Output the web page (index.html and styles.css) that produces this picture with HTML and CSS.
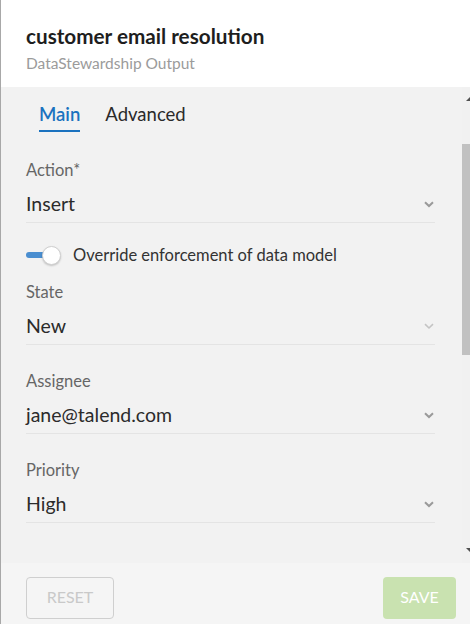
FILE: index.html
```html
<!DOCTYPE html>
<html lang="en">
<head>
<meta charset="utf-8">
<title>customer email resolution</title>
<link rel="stylesheet" href="styles.css">
</head>
<body>
<div class="panel">
  <header class="header">
    <h1 class="title">customer email resolution</h1>
    <div class="subtitle">DataStewardship Output</div>
  </header>
  <div class="body">
    <div class="form">
      <nav class="tabs">
        <span class="tab active">Main</span>
        <span class="tab">Advanced</span>
      </nav>
      <div class="field first">
        <div class="label">Action*</div>
        <div class="select"><span>Insert</span><svg class="chev" width="10" height="7" viewBox="0 0 10 7"><path d="M1 1.2 L5 5 L9 1.2" fill="none" stroke="#9a9a9a" stroke-width="2"/></svg></div>
      </div>
      <div class="toggle-row">
        <span class="toggle"><span class="track"></span><span class="knob"></span></span>
        <span class="toggle-label">Override enforcement of data model</span>
      </div>
      <div class="field after-toggle">
        <div class="label">State</div>
        <div class="select"><span>New</span><svg class="chev light" width="10" height="7" viewBox="0 0 10 7"><path d="M1 1.2 L5 5 L9 1.2" fill="none" stroke="#c4c4c4" stroke-width="1.6"/></svg></div>
      </div>
      <div class="field">
        <div class="label">Assignee</div>
        <div class="select"><span>jane@talend.com</span><svg class="chev" width="10" height="7" viewBox="0 0 10 7"><path d="M1 1.2 L5 5 L9 1.2" fill="none" stroke="#9a9a9a" stroke-width="2"/></svg></div>
      </div>
      <div class="field">
        <div class="label">Priority</div>
        <div class="select"><span>High</span><svg class="chev" width="10" height="7" viewBox="0 0 10 7"><path d="M1 1.2 L5 5 L9 1.2" fill="none" stroke="#9a9a9a" stroke-width="2"/></svg></div>
      </div>
    </div>
    <div class="scrollbar">
      <svg class="sb-btn" width="8" height="17" viewBox="0 0 8 17"><polygon points="4,14 8,10 8,14" fill="#505050"/></svg>
      <div class="sb-track"><div class="sb-thumb"></div></div>
      <svg class="sb-btn" width="8" height="17" viewBox="0 0 8 17"><polygon points="4,2 8,2 8,6" fill="#505050"/></svg>
    </div>
  </div>
  <footer class="footer">
    <button class="btn reset">RESET</button>
    <button class="btn save">SAVE</button>
  </footer>
</div>
</body>
</html>
```
FILE: styles.css
```css
html, body {
  margin: 0;
  padding: 0;
  height: 100%;
}
body {
  font-family: Lato, "Open Sans", sans-serif;
  background: #ffffff;
}
.panel {
  height: 624px;
  display: flex;
  flex-direction: column;
  border-left: 1px solid #a8a8a8;
  box-sizing: border-box;
}
.header {
  height: 87px;
  box-sizing: border-box;
  padding: 24px 0 0 25px;
  background: #fff;
}
.title {
  margin: 0;
  font-size: 20.7px;
  line-height: 24px;
  font-weight: 700;
  color: #1e1e1e;
}
.subtitle {
  margin-top: 5px;
  font-size: 15.5px;
  line-height: 20px;
  color: #9b9b9b;
}
.body {
  flex: 1;
  display: flex;
  background: #f2f2f2;
  min-height: 0;
}
.form {
  flex: 1;
  padding: 0 27px 0 25px;
}
.tabs {
  display: flex;
  gap: 25px;
  padding-left: 13px;
}
.tab {
  padding: 15px 0 4px;
  line-height: 24px;
  font-size: 18.5px;
  color: #2a2a2a;
  border-bottom: 2px solid transparent;
}
.tab.active {
  color: #1b72bf;
  border-bottom-color: #1b72bf;
  font-weight: 600;
}
.field {
  margin-top: 26px;
}
.field.first {
  margin-top: 28px;
}
.field.after-toggle {
  margin-top: 15px;
}
.label {
  font-size: 16.5px;
  line-height: 20px;
  color: #666;
}
.select {
  margin-top: 6px;
  height: 36px;
  box-sizing: content-box;
  display: flex;
  align-items: center;
  justify-content: space-between;
  border-bottom: 1px solid #e4e4e4;
  font-size: 19.5px;
  color: #2b2b2b;
}
.select span {
  margin-top: -2px;
}
.chev {
  margin-right: 1px;
}
.toggle-row {
  margin-top: 20px;
  height: 24px;
  display: flex;
  align-items: center;
  gap: 13px;
}
.toggle {
  position: relative;
  width: 34px;
  height: 20px;
  display: inline-block;
}
.track {
  position: absolute;
  left: 0;
  top: 7px;
  width: 24px;
  height: 6px;
  border-radius: 3px;
  background: #4a8ed0;
}
.knob {
  position: absolute;
  left: 16px;
  top: 1px;
  width: 17px;
  height: 17px;
  border-radius: 50%;
  background: #fff;
  border: 1px solid #d0d0d0;
  box-shadow: 0 1px 2px rgba(0,0,0,0.2);
  box-sizing: content-box;
}
.toggle-label {
  font-size: 16.5px;
  color: #333;
}
.scrollbar {
  width: 8px;
  display: flex;
  flex-direction: column;
  background: #f1f1f1;
}
.sb-btn {
  display: block;
  flex: none;
}
.sb-track {
  flex: 1;
}
.sb-thumb {
  margin-top: 40px;
  height: 211px;
  background: #c1c1c1;
}
.footer {
  height: 61px;
  box-sizing: border-box;
  background: #f5f5f5;
  padding: 14px 14px 5px 25px;
  display: flex;
  justify-content: space-between;
}
.btn {
  height: 42px;
  font-family: Lato, sans-serif;
  font-size: 16px;
  line-height: 18px;
  border-radius: 4px;
  padding: 0 0 2px;
}
.reset {
  width: 88px;
  background: transparent;
  border: 1px solid #cfcfcf;
  color: #c9c9c9;
}
.save {
  width: 73px;
  background: #c9e2b0;
  border: none;
  color: #fff;
}
```
